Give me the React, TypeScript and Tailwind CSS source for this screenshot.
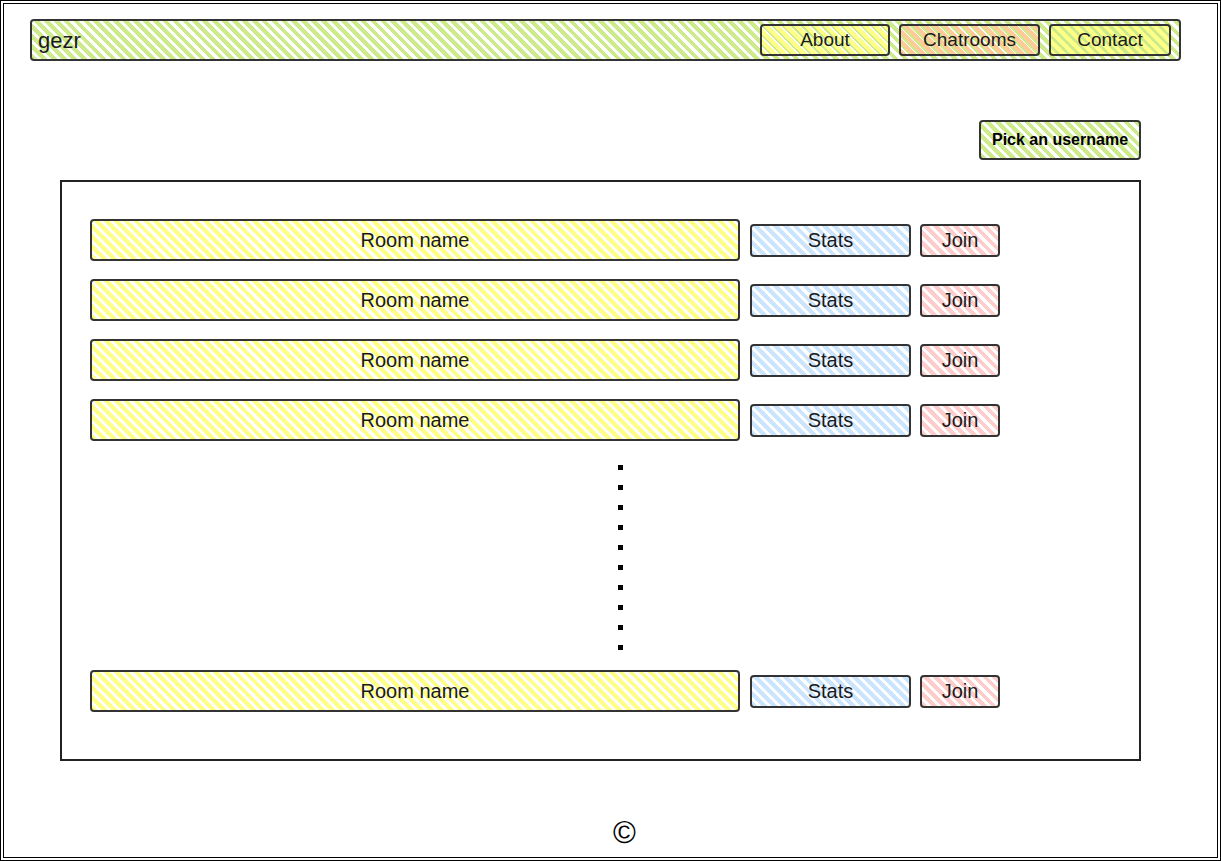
const green = "bg-[repeating-linear-gradient(45deg,#cdeb8b_0_4px,transparent_4px_7px)]";
const yellow = "bg-[repeating-linear-gradient(45deg,#ffff88_0_4px,transparent_4px_7px)]";
const orange = "bg-[repeating-linear-gradient(45deg,#ffcc99_0_4px,transparent_4px_7px)]";
const blue = "bg-[repeating-linear-gradient(45deg,#cce5ff_0_4px,transparent_4px_7px)]";
const red = "bg-[repeating-linear-gradient(45deg,#ffcccc_0_4px,transparent_4px_7px)]";

const NavButton = ({ label, fill, width }: { label: string; fill: string; width: string }) => (
  <div
    className={`${fill} ${width} h-[32px] flex items-center justify-center rounded-[4px] border-2 border-[#333] text-[19px] text-[#1a1a1a]`}
  >
    {label}
  </div>
);

const RoomRow = () => (
  <div className="flex items-center h-[42px]">
    <div
      className={`${yellow} w-[650px] h-[42px] flex items-center justify-center rounded-[4px] border-2 border-[#333] text-[20px] text-[#1a1a1a]`}
    >
      Room name
    </div>
    <div
      className={`${blue} ml-[10px] w-[161px] h-[33px] flex items-center justify-center rounded-[4px] border-2 border-[#333] text-[20px] text-[#1a1a1a]`}
    >
      Stats
    </div>
    <div
      className={`${red} ml-[9px] w-[80px] h-[33px] flex items-center justify-center rounded-[4px] border-2 border-[#333] text-[20px] text-[#1a1a1a]`}
    >
      Join
    </div>
  </div>
);

export default function App() {
  const dots = Array.from({ length: 10 });

  return (
    <div className="w-[1221px] h-[861px] border-4 border-double border-black bg-white flex flex-col font-['Liberation_Sans',Arial,sans-serif]">
      {/* top bar */}
      <div
        className={`${green} ml-[26px] mt-[15px] w-[1151px] h-[42px] rounded-[4px] border-2 border-[#333] flex items-center pl-[6px] pr-[8px]`}
      >
        <span className="text-[22px] text-[#1a1a1a]">gezr</span>
        <div className="ml-auto flex items-center gap-[9px]">
          <NavButton label="About" fill={yellow} width="w-[130px]" />
          <NavButton label="Chatrooms" fill={orange} width="w-[141px]" />
          <NavButton label="Contact" fill={yellow} width="w-[122px]" />
        </div>
      </div>

      <div className="ml-[56px] w-[1081px] flex flex-col">
        <div className="flex justify-end mt-[59px]">
          <div
            className={`${green} w-[162px] h-[40px] rounded-[4px] border-2 border-[#333] flex items-center justify-center text-[16px] font-bold text-black`}
          >
            Pick an username
          </div>
        </div>

        {/* rooms list */}
        <div className="mt-[20px] h-[581px] border-2 border-[#222] pt-[37px] pl-[28px] flex flex-col">
          <div className="flex flex-col gap-[18px]">
            <RoomRow />
            <RoomRow />
            <RoomRow />
            <RoomRow />
          </div>
          <div className="flex flex-col gap-[15px] ml-[528px] pt-[24px] pb-[20px]">
            {dots.map((_, i) => (
              <div key={i} className="w-[5px] h-[5px] bg-black" />
            ))}
          </div>
          <RoomRow />
        </div>
      </div>

      <div className="mt-[56px] ml-[609px] text-[31px] leading-none text-black">©</div>
    </div>
  );
}
